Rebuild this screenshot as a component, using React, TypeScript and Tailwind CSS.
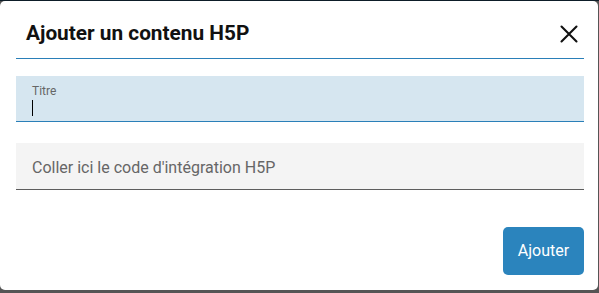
import type { FC } from "react";

const CloseIcon: FC = () => (
	<svg width="18" height="18" viewBox="0 0 18 18" fill="none">
		<path d="M1.5 1.5L16.5 16.5M16.5 1.5L1.5 16.5" stroke="#111" strokeWidth="2.1" strokeLinecap="round" />
	</svg>
);

export default function App() {
	return (
		<div
			className="h-[293px] w-[599px] overflow-hidden border-t border-[#0d1d28] bg-[#555] pr-px pb-[2px]"
			style={{ fontFamily: "Roboto, 'Liberation Sans', sans-serif" }}
		>
			<div className="flex h-[289px] flex-col rounded-[5px] bg-white pl-4 pr-[14px]">
				<div className="flex h-[58px] items-center justify-between border-b border-[#2a7fb8] pl-[10px] pr-[6px] pt-[9px]">
					<h2 className="m-0 text-[20.8px] font-bold text-[#111]">
						Ajouter un contenu H5P
					</h2>
					<button type="button" className="flex items-center">
						<CloseIcon />
					</button>
				</div>

				<div className="mt-[17px] flex h-[46px] flex-col border-b border-[#2a7fb8] bg-[#d6e6f0] px-4 pt-[8px]">
					<span className="text-[12px] leading-[14px] text-[#666]">Titre</span>
					<span className="mt-[2px] h-[16px] w-px bg-black" />
				</div>

				<div className="mt-[21px] flex h-[47px] items-center border-b border-[#5d5d5d] bg-[#f4f4f4] px-4 pt-[3px]">
					<span className="text-[16px] text-[#666]">
						Coller ici le code d'intégration H5P
					</span>
				</div>

				<div className="mt-[37px] flex justify-end">
					<button
						type="button"
						className="h-[48px] w-[81px] rounded-[5px] bg-[#2b84bd] text-[16px] text-white"
					>
						Ajouter
					</button>
				</div>
			</div>
		</div>
	);
}
